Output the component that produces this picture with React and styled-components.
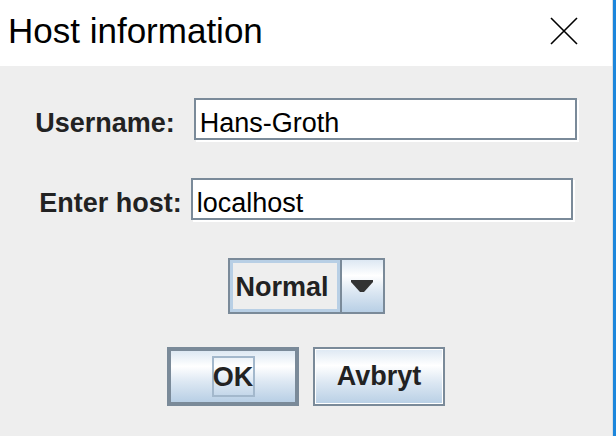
import styled, { createGlobalStyle } from "styled-components";

const GlobalStyle = createGlobalStyle`
  html, body {
    margin: 0;
    padding: 0;
    background: #eeeeee;
  }
  * {
    box-sizing: border-box;
  }
`;

const Frame = styled.div`
  display: flex;
  width: 616px;
  height: 436px;
  overflow: hidden;
`;

const Window = styled.div`
  flex: 1;
  display: flex;
  flex-direction: column;
  background: #eeeeee;
  border-right: 1px solid #d9dde2;
`;

const AccentEdge = styled.div`
  width: 3px;
  background: #1c86dc;
`;

const TitleBar = styled.div`
  height: 66px;
  display: flex;
  align-items: center;
  justify-content: space-between;
  padding: 0 34px 4px 8px;
  background: #ffffff;
`;

const Title = styled.span`
  font-family: "Liberation Sans", Arial, sans-serif;
  font-size: 35px;
  color: #000000;
`;

const CloseButton = styled.button`
  display: flex;
  padding: 0;
  border: none;
  background: none;
`;

const Content = styled.div`
  display: flex;
  flex-direction: column;
  align-items: center;
  padding-top: 32px;
  font-family: "Liberation Sans", Arial, sans-serif;
`;

const Row = styled.div`
  display: flex;
  align-items: baseline;
  justify-content: center;
  gap: ${(p) => p.$gap}px;
  width: 100%;
  height: 44px;
  margin-bottom: ${(p) => p.$after}px;
`;

const Label = styled.label`
  font-size: 27px;
  font-weight: 700;
  color: #222222;
`;

const TextField = styled.input`
  width: ${(p) => p.$width}px;
  height: 42px;
  padding: 8px 4px 0 4px;
  border: 2px solid #7a8a99;
  box-shadow: 2px 2px 0 #ffffff;
  background: #ffffff;
  font-family: "Liberation Sans", Arial, sans-serif;
  font-size: 27px;
  color: #000000;
  outline: none;
`;

const Combo = styled.div`
  display: flex;
  width: 157px;
  height: 56px;
  border: 2px solid #7a8a99;
  margin-bottom: 33px;
`;

const ComboValue = styled.div`
  flex: 1;
  display: flex;
  align-items: center;
  padding: 2px 0 0 6px;
  background: #eeeeee;
  box-shadow: inset 0 0 0 3px #b8cfe5;
  font-size: 27px;
  font-weight: 700;
  color: #222222;
`;

const ArrowButton = styled.div`
  width: 43px;
  display: flex;
  align-items: center;
  justify-content: center;
  border-left: 2px solid #7a8a99;
  background: linear-gradient(#dde8f3 0%, #ffffff 30%, #dde8f3 60%, #b8cfe5 100%);
`;

const ButtonRow = styled.div`
  display: flex;
  gap: 14px;
`;

const Button = styled.button`
  width: 132px;
  height: 59px;
  display: flex;
  align-items: center;
  justify-content: center;
  padding: 0;
  border: ${(p) => (p.$default ? "4px" : "2px")} solid #7a8a99;
  box-shadow: ${(p) => (p.$default ? "none" : "inset 0 0 0 1px #ffffff")};
  background: linear-gradient(#dde8f3 0%, #ffffff 30%, #dde8f3 60%, #b8cfe5 100%);
  font-family: "Liberation Sans", Arial, sans-serif;
  font-size: 27px;
  font-weight: 700;
  color: #222222;
`;

const FocusRing = styled.span`
  display: flex;
  align-items: center;
  justify-content: center;
  width: 43px;
  height: 41px;
  padding-top: 2px;
  border: 2px solid #a3b8cc;
`;

export default function App() {
  return (
    <Frame>
      <GlobalStyle />
      <Window>
        <TitleBar>
          <Title>Host information</Title>
          <CloseButton aria-label="Close">
            <svg width="28" height="28" viewBox="0 0 28 28">
              <path d="M1 1 L27 27 M27 1 L1 27" stroke="#000" strokeWidth="1.6" fill="none" />
            </svg>
          </CloseButton>
        </TitleBar>
        <Content>
          <Row $gap={19} $after={36}>
            <Label>Username:</Label>
            <TextField $width={383} readOnly value="Hans-Groth" />
          </Row>
          <Row $gap={9} $after={36}>
            <Label>Enter host:</Label>
            <TextField $width={382} readOnly value="localhost" />
          </Row>
          <Combo>
            <ComboValue>Normal</ComboValue>
            <ArrowButton>
              <svg width="22" height="12" viewBox="0 0 22 12">
                <path d="M0 0 H22 V2 L13 12 H9 L0 2 Z" fill="#333" />
              </svg>
            </ArrowButton>
          </Combo>
          <ButtonRow>
            <Button $default>
              <FocusRing>OK</FocusRing>
            </Button>
            <Button>Avbryt</Button>
          </ButtonRow>
        </Content>
      </Window>
      <AccentEdge />
    </Frame>
  );
}
